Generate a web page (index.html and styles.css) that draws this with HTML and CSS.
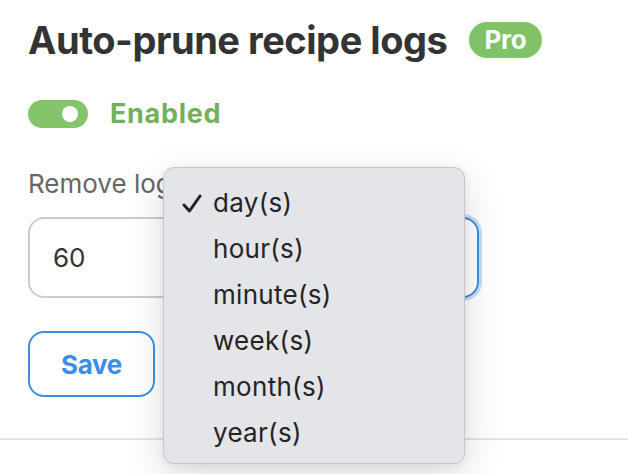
FILE: index.html
```html
<!DOCTYPE html>
<html>
<head>
<meta charset="utf-8">
<link rel="stylesheet" href="styles.css">
</head>
<body>
<div class="page">
  <section class="panel">
    <h2 class="title"><span>Auto-prune recipe logs</span><span class="badge">Pro</span></h2>
    <div class="toggle-row">
      <span class="switch"><span class="knob"></span></span>
      <span class="status">Enabled</span>
    </div>
    <div class="label">Remove logs older than</div>
    <div class="field-row">
      <div class="num-input">60</div>
      <div class="unit-select">day(s)</div>
    </div>
    <button class="save">Save</button>
  </section>
  <div class="divider"></div>

  <ul class="menu">
    <li class="item selected"><svg class="check" width="20" height="20" viewBox="0 0 20 20"><polyline points="2,11 7.5,17 18,2" fill="none" stroke="#222222" stroke-width="3" stroke-linecap="round" stroke-linejoin="round"/></svg>day(s)</li>
    <li class="item">hour(s)</li>
    <li class="item">minute(s)</li>
    <li class="item">week(s)</li>
    <li class="item">month(s)</li>
    <li class="item">year(s)</li>
  </ul>
</div>
</body>
</html>
```

FILE: styles.css
```css
* { box-sizing: border-box; }
html, body {
  margin: 0;
  padding: 0;
  background: #ffffff;
  font-family: Inter, Roboto, "Liberation Sans", Arial, sans-serif;
  color: #333333;
}
.page {
  position: relative;
  width: 628px;
  height: 474px;
  overflow: hidden;
}
.panel {
  padding: 16px 28px 0 28px;
  display: flex;
  flex-direction: column;
  align-items: flex-start;
}
.title {
  margin: 0;
  display: flex;
  align-items: center;
  gap: 22px;
  font-size: 38px;
  font-weight: 700;
  letter-spacing: -0.45px;
  line-height: 48px;
  color: #333333;
}
.badge {
  display: inline-flex;
  align-items: center;
  justify-content: center;
  height: 36px;
  padding: 0 15px;
  border-radius: 18px;
  background: #80c268;
  color: #ffffff;
  font-size: 26px;
  font-weight: 700;
  letter-spacing: -0.2px;
}
.toggle-row {
  margin-top: 35px;
  display: flex;
  align-items: center;
  gap: 22px;
}
.switch {
  position: relative;
  width: 60px;
  height: 28px;
  border-radius: 14px;
  background: #84c46a;
}
.knob {
  position: absolute;
  top: 6px;
  left: 34px;
  width: 16px;
  height: 16px;
  border-radius: 50%;
  background: #ffffff;
}
.status {
  font-size: 27px;
  font-weight: 700;
  color: #72b05c;
  line-height: 30px;
  letter-spacing: 0.7px;
}
.label {
  margin-top: 40px;
  font-size: 26px;
  color: #666666;
  line-height: 30px;
}
.field-row {
  margin-top: 18px;
  display: flex;
  gap: 12px;
  width: 451px;
}
.num-input {
  width: 220px;
  height: 81px;
  border: 2px solid #cccccc;
  border-radius: 16px;
  padding-left: 23px;
  display: flex;
  align-items: center;
  font-size: 26px;
  color: #333333;
}
.unit-select {
  flex: 1;
  height: 81px;
  border: 2px solid #3a8de0;
  border-radius: 16px;
  box-shadow: 0 0 0 3px #c9ddf5;
  padding-left: 24px;
  display: flex;
  align-items: center;
  font-size: 26px;
}
.save {
  margin-top: 33px;
  width: 127px;
  height: 66px;
  border: 2px solid #3d8fe2;
  border-radius: 16px;
  background: #ffffff;
  color: #3a8ee6;
  font-family: inherit;
  font-size: 26px;
  font-weight: 700;
  letter-spacing: -0.3px;
  padding: 0;
}
.divider {
  margin-top: 41px;
  height: 2px;
  background: #e3e3e3;
}
.menu {
  position: absolute;
  left: 163px;
  top: 167px;
  width: 302px;
  height: 297px;
  margin: 0;
  padding: 12px 0 0 0;
  list-style: none;
  background: #e4e5e8;
  border: 1px solid #c6c6c8;
  border-radius: 11px;
  box-shadow: 0 12px 40px rgba(0, 0, 0, 0.14), 0 2px 8px rgba(0, 0, 0, 0.06);
}
.item {
  position: relative;
  height: 46px;
  line-height: 46px;
  padding-left: 49px;
  font-size: 26px;
  letter-spacing: 0.3px;
  color: #242424;
}
.check {
  position: absolute;
  left: 18px;
  top: 14px;
}
```
